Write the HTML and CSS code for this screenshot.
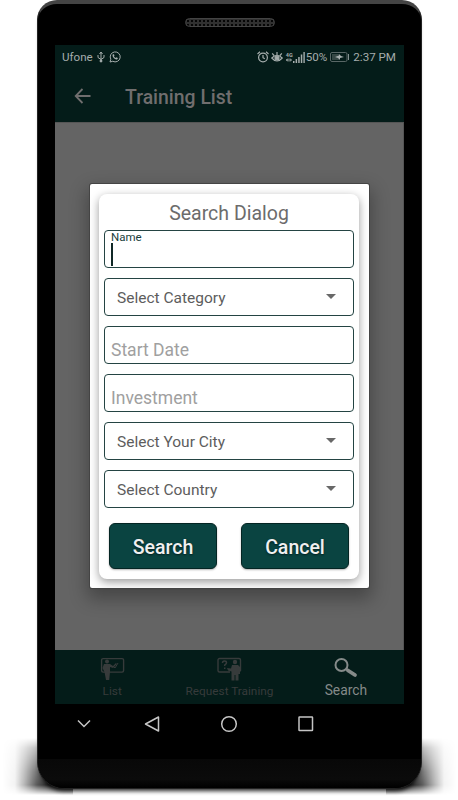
FILE: index.html
```
<!DOCTYPE html>
<html lang="en">
<head>
<meta charset="utf-8">
<title>Training List</title>
<link rel="stylesheet" href="styles.css">
</head>
<body>
<div class="stage">
  <div class="ground-shadow left"></div>
  <div class="ground-shadow right"></div>
  <div class="phone">
    <div class="speaker"></div>
    <main class="screen">
      <div class="status">
        <span class="carrier">Ufone</span>
        <svg class="usb" width="8" height="12" viewBox="0 0 8 12" fill="none" stroke="currentColor"><path d="M4 1v10M1 4v2.500l3 2 3-2V4M2.500 3L4 1l1.500 2"/><circle cx="4" cy="10" r="1" fill="currentColor"/></svg>
        <svg class="whatsapp" width="12" height="12" viewBox="0 0 24 24" fill="none" stroke="currentColor" stroke-width="2"><path d="M2 22l1.600-5.500A10 10 0 1 1 7.500 20.500z"/><path d="M8 6.500l2 0 1 3-1.300 1.200c.8 1.700 2 2.800 3.700 3.500l1.400-1.600 2.800 1.400c0 2-1.200 3-3 3C11 16.500 7 12.500 7 9c0-1 .4-2 1-2.500z" fill="currentColor" stroke="none"/></svg>
        <span class="spacer"></span>
        <svg class="alarm" width="12" height="12" viewBox="0 0 12 12" fill="none" stroke="currentColor" stroke-width="1.200"><circle cx="6" cy="6.500" r="4.400"/><path d="M6 4v2.700l1.800 1.100M.5 3L3 .8M11.500 3L9 .8"/></svg>
        <svg class="eye" width="12" height="12" viewBox="0 0 12 12" fill="none" stroke="currentColor" stroke-width="1.200"><path d="M.8 7Q6 1.500 11.200 7 6 13 .8 7zM6 4V1M3 4.500L1.200 2.400M9 4.500l1.800-2.100"/><circle cx="6" cy="7" r="2" fill="currentColor"/></svg>
        <span class="network"><span>4G</span><svg width="6" height="4" viewBox="0 0 6 4" stroke="currentColor" fill="none"><path d="M0 2h5M2 .5L.5 2 2 3.500M4 .5L5.500 2 4 3.500"/></svg></span>
        <svg class="signal" width="12" height="11" viewBox="0 0 12 11" fill="currentColor"><path d="M0 9h1.500v2H0zM2.600 7h1.500v4H2.600zM5.200 5h1.500v6H5.200zM7.800 2.500h1.500V11H7.800zM10.400 0h1.400v11h-1.400z"/></svg>
        <span class="percent">50%</span>
        <svg class="battery" width="20" height="10" viewBox="0 0 20 10"><rect x=".5" y=".5" width="16.500" height="9" rx="1.500" fill="none" stroke="#596766"/><path d="M2 2h7v6H2z" fill="#354744"/><path d="M5 5l4-1.500V2l2 2 3 1-4 1v2L8 6z" fill="#a8b0af"/><path d="M18.500 2v6" stroke="#839190"/></svg>
        <span class="time">2:37 PM</span>
      </div>
      <header class="appbar">
        <svg width="18" height="16" viewBox="0 0 18 16" fill="none" stroke="currentColor" stroke-width="1.800"><path d="M16.500 8H2M8.500 1L1.700 8l6.800 7"/></svg>
        <h1>Training List</h1>
      </header>
      <section class="content">
        <div class="dialog">
          <form class="card">
            <h2>Search Dialog</h2>
            <div class="field active"><label>Name</label><i class="caret"></i></div>
            <div class="field select">Select Category<i class="arrow"></i></div>
            <div class="field input">Start Date</div>
            <div class="field input">Investment</div>
            <div class="field select">Select Your City<i class="arrow"></i></div>
            <div class="field select">Select Country<i class="arrow"></i></div>
            <div class="actions"><button type="button">Search</button><button type="button">Cancel</button></div>
          </form>
        </div>
      </section>
      <nav class="tabs">
        <div class="tab first">
          <svg width="26" height="24" viewBox="0 0 26 24" fill="none" stroke="currentColor"><rect x="2.600" y="1.600" width="22" height="13.500" rx="1.500" stroke-width="1.400"/><circle cx="8" cy="4.500" r="2" fill="currentColor" stroke="none"/><path d="M5 7h6l3 2 3-3 .8 1-3.700 4L11 10v5l-.8 8H7l-1.500-8-2-4z" fill="currentColor" stroke="none"/><path d="M14 9l2 2 3-5"/></svg>
          <span>List</span>
        </div>
        <div class="tab middle">
          <svg width="26" height="24" viewBox="0 0 26 24" fill="none" stroke="currentColor"><path d="M14 15H3.500a1.500 1.500 0 0 1-1.500-1.500V3a1.500 1.500 0 0 1 1.500-1.500H23A1.500 1.500 0 0 1 24.500 3v10.500L23 15" stroke-width="1.400"/><path d="M6.500 6q0-2 2-2t2 1.700q0 1-1.800 2.300v1M8.700 10.500V12" stroke-width="1.500"/><circle cx="19" cy="5" r="2.200" fill="currentColor" stroke="none"/><path d="M16 8h6l2 2v7h-1.500v6.500h-3V18h-1v5.500h-3v-9L12 13.500 11 11l4 .5z" fill="currentColor" stroke="none"/></svg>
          <span>Request Training</span>
        </div>
        <div class="tab selected">
          <svg width="26" height="24" viewBox="0 0 26 24" fill="none" stroke="currentColor"><circle cx="8.500" cy="8" r="6" stroke-width="2"/><path d="M13 12l2.500 1.500" stroke-width="2.500"/><path d="M15 13.500l7 4.500" stroke-width="3.800" stroke-linecap="round"/></svg>
          <span>Search</span>
        </div>
      </nav>
    </main>
    <div class="system-nav">
      <svg width="14" height="9" viewBox="0 0 14 9"><path d="M1 1.500l6 6 6-6"/></svg>
      <svg width="16" height="18" viewBox="0 0 16 18"><path d="M14.500 2v14L1.500 9z" stroke-linejoin="round"/></svg>
      <svg width="18" height="18" viewBox="0 0 18 18"><circle cx="9" cy="9" r="7.300"/></svg>
      <svg width="16" height="16" viewBox="0 0 16 16"><rect x="1" y="1" width="13.500" height="13.500" rx=".5"/></svg>
    </div>
    <div class="chin"></div>
  </div>
</div>
</body>
</html>
```
FILE: styles.css
```
* { box-sizing: border-box; }
body { margin: 0; background: #fff; font-family: Roboto, "Liberation Sans", sans-serif; }
.stage { position: relative; width: 458px; height: 800px; overflow: hidden; padding-left: 37px; }
.ground-shadow { position: absolute; top: 738px; width: 70px; height: 58px; background: linear-gradient(to right, transparent 0, rgba(0,0,0,.05) 12px, rgba(0,0,0,.3) 22px, rgba(0,0,0,.65) 34px, #000 54px); -webkit-mask-image: linear-gradient(transparent 0, rgba(0,0,0,.4) 10px, rgba(0,0,0,.85) 34px, #000 47px, transparent 57px); mask-image: linear-gradient(transparent 0, rgba(0,0,0,.4) 10px, rgba(0,0,0,.85) 34px, #000 47px, transparent 57px); }
.ground-shadow.left { left: 3px; }
.ground-shadow.right { left: 386px; transform: scaleX(-1); }
.phone { position: relative; display: flex; flex-direction: column; width: 385px; height: 789px; background: #000; border: 1px solid #222; border-top: 4px solid #444; border-radius: 20px 20px 27px 27px; padding: 0 17px; overflow: hidden; box-shadow: 0 5px 4px -3px rgba(0,0,0,.85); }
.speaker { width: 90px; height: 9px; margin: 14px auto 18px; border: 1px solid #444; border-radius: 5px; background: radial-gradient(circle, #050505 1px, #303030 1.500px) 0 0 / 4px 4px; flex: none; }
.screen { display: flex; flex-direction: column; width: 349px; height: 659px; background: #041c19; flex: none; }
.status { display: flex; align-items: center; height: 24px; padding: 0 8px 0 7px; color: #a5adac; font-size: 11.600px; line-height: 24px; white-space: nowrap; }
.usb { margin-left: 4px; }
.whatsapp { margin-left: 4px; }
.spacer { flex: 1; }
.alarm { margin-right: -1px; }
.eye { margin-left: 3px; }
.network { display: flex; flex-direction: column; width: 6px; margin-left: 3px; font-size: 5.500px; line-height: 6px; font-weight: 700; }
.signal { margin-left: 1px; }
.percent { margin-left: 1px; font-size: 11.600px; }
.battery { margin-left: 3px; }
.time { margin-left: 3px; }
.appbar { display: flex; align-items: center; height: 53px; padding-left: 19px; color: #706e6e; }
.appbar h1 { margin: 4px 0 0 33px; font-size: 19.400px; font-weight: 500; }
.appbar svg { margin-top: 1px; }
.content { display: flex; align-items: flex-start; justify-content: center; height: 528px; padding-top: 61px; background: #646464; border-top: 1px solid #555; box-shadow: inset -1px 0 #555; }
.dialog { width: 279px; height: 404px; padding: 10px 10px 9px 9px; border-radius: 2px; background: #fff; box-shadow: 0 0 0 1px #444, 0 8px 18px 3px rgba(0,0,0,.3); overflow: hidden; }
.card { height: 385px; padding: 5px 5px 0; border-radius: 8px; background: #fff; box-shadow: 0 3px 10px rgba(0,0,0,.4); }
.card h2 { margin: 0; height: 31px; text-align: center; font-size: 19.500px; font-weight: 400; line-height: 29px; color: #6c6c6c; }
.field { display: flex; align-items: center; height: 38px; margin-bottom: 10px; border: 1px solid #244443; border-radius: 4px; color: #5d5d5d; font-size: 15.500px; }
.field.active { flex-direction: column; align-items: flex-start; padding-left: 6px; color: #193e3c; font-size: 11.500px; line-height: 12px; }
.caret { width: 2px; height: 23px; background: #102826; }
.select { justify-content: space-between; padding: 1px 17px 0 12px; }
.arrow { border: 5px solid transparent; border-top-color: #686868; border-bottom: 0; margin-bottom: 2px; }
.input { padding: 9px 0 0 6px; color: #a0a0a0; font-size: 17.500px; }
.actions { display: flex; justify-content: space-between; padding: 5px 5px 0; }
.actions button { width: 108px; height: 46px; padding: 2px 0 0; border: 1px solid #042523; border-radius: 6px; background: #0a4441; color: #f0f0f0; font: 500 19.500px Roboto, sans-serif; text-shadow: 0 1px 2px #021e1d; box-shadow: 0 1px 2px rgba(0,0,0,.3); }
.tabs { display: grid; grid-template-columns: repeat(3, 1fr); height: 54px; padding-top: 7px; color: #373b3b; }
.tab { display: flex; flex-direction: column; align-items: center; font-size: 11.800px; line-height: 16px; }
.first { padding-right: 2px; }
.tab span { margin-top: 2px; }
.selected { color: #858a89; font-size: 13.800px; }
.selected span { margin-top: 1px; }
.system-nav { display: grid; grid-template-columns: 60px 76px 78px 76px; align-items: center; justify-items: center; height: 39px; margin-left: -1px; flex: none; }
.system-nav svg { fill: none; stroke: #c5c5c5; stroke-width: 1.500; }
.chin { height: 29px; margin: 16px -17px 0; background: linear-gradient(#080808, #0b0b0b 70%, #000); flex: none; }
```
